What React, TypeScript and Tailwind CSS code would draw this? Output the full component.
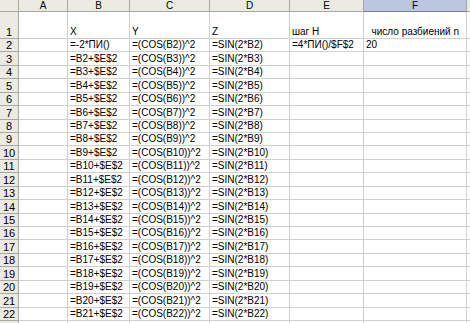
import React from "react";

const colW = [19, 49, 62, 80, 80, 74, 103, 20];
const rowH = [13, 14, 13, 14, 13, 14, 13, 13, 14, 13, 14, 13, 14, 13, 13, 14, 13, 14, 13, 14, 13];

function rowData(r: number): string[] {
  if (r === 1) return ["", "X", "Y", "Z", "шаг H", "\u00a0\u00a0число разбиений n", ""];
  if (r === 2) return ["", "=-2*ПИ()", "=(COS(B2))^2", "=SIN(2*B2)", "=4*ПИ()/$F$2", "20", ""];
  if (r === 23) return ["", "", "", "", "", "", ""];
  return ["", `=B${r - 1}+$E$2`, `=(COS(B${r}))^2`, `=SIN(2*B${r})`, "", "", ""];
}

export default function App() {
  const heights = [12, 27, ...rowH, 14];
  const letters = ["A", "B", "C", "D", "E", "F", ""];
  return (
    <div
      className="w-[470px] h-[323px] overflow-hidden bg-white text-black"
      style={{ fontFamily: '"Liberation Sans", Arial, sans-serif' }}
    >
      <div
        className="grid"
        style={{
          gridTemplateColumns: colW.map((w) => `${w}px`).join(" "),
          gridTemplateRows: heights.map((h) => `${h}px`).join(" "),
        }}
      >
        {/* header row */}
        <div className="bg-[#ebeae3] border-r border-b border-[#a9a89e]" />
        {letters.map((l, i) => (
          <div
            key={i}
            className={`flex items-center justify-center text-[10px] leading-[12px] border-r border-b border-[#a9a89e] ${
              l === "F" ? "bg-[#bcc6e0] border-b-[#6f7fa8]" : "bg-[#ebeae3]"
            }`}
          >
            {l}
          </div>
        ))}
        {Array.from({ length: 23 }, (_, k) => k + 1).map((r) => {
          const d = rowData(r);
          return (
            <React.Fragment key={r}>
              <div className="bg-[#ebeae3] border-r border-b border-[#a9a89e] flex items-end justify-center text-[11px] leading-[12px]">
                {r < 23 ? r : ""}
              </div>
              {d.map((t, i) => (
                <div
                  key={i}
                  className="border-r border-b border-[#d0d0d0] flex items-end pl-[2px] text-[10px] leading-[12px] whitespace-nowrap overflow-visible"
                >
                  {t}
                </div>
              ))}
            </React.Fragment>
          );
        })}
      </div>
    </div>
  );
}
